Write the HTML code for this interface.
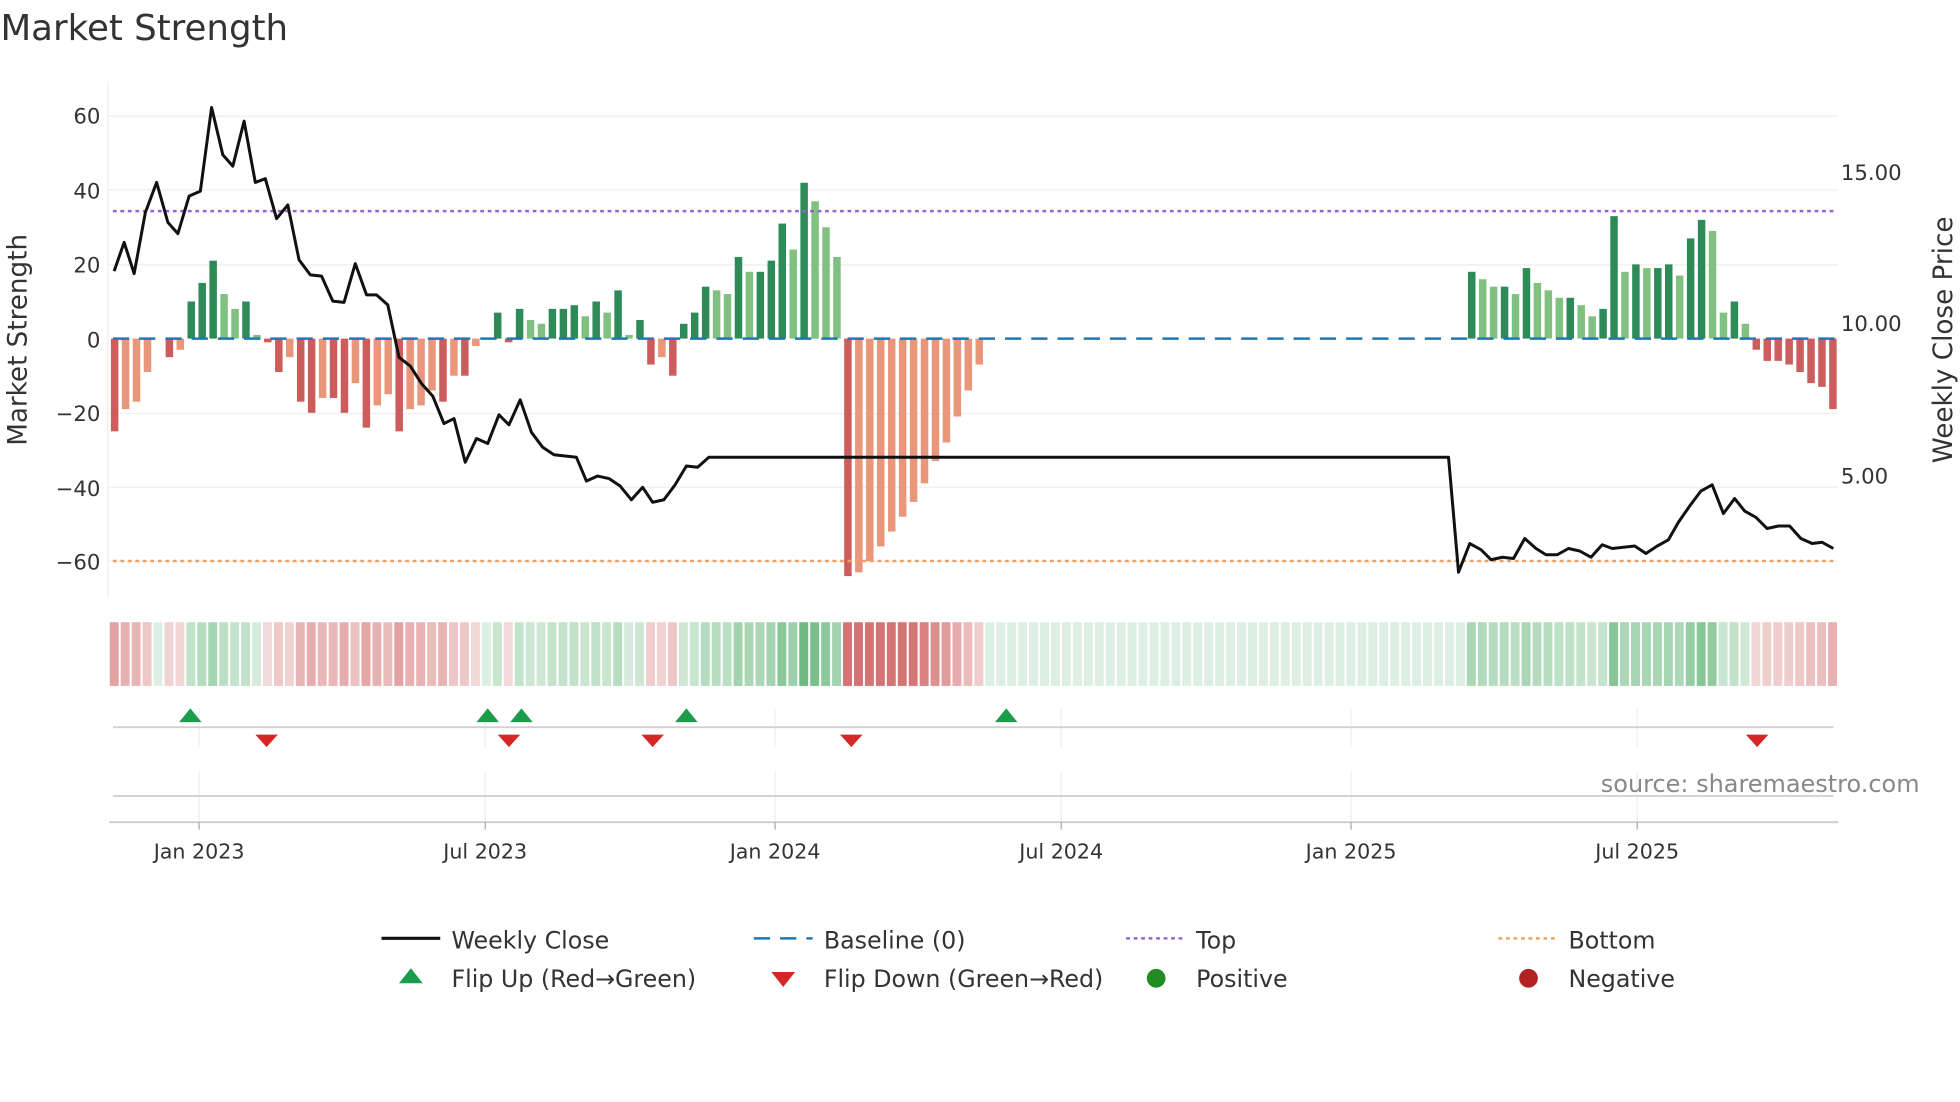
<!DOCTYPE html>
<html><head><meta charset="utf-8"><style>
html,body{margin:0;padding:0;background:#fff;}
svg{display:block;font-family:"DejaVu Sans","Liberation Sans",sans-serif;}
</style></head><body>
<svg id="s" width="1960" height="1102" viewBox="0 0 1568 882" xmlns="http://www.w3.org/2000/svg">
<text x="0" y="32" font-size="28.5" fill="#333">Market Strength</text>
<g stroke="#eeeeee" stroke-width="1">
<line x1="86" y1="93" x2="1471" y2="93"/><line x1="86" y1="152" x2="1471" y2="152"/>
<line x1="86" y1="212" x2="1471" y2="212"/><line x1="86" y1="331" x2="1471" y2="331"/>
<line x1="86" y1="390" x2="1471" y2="390"/><line x1="86" y1="449" x2="1471" y2="449"/>
<line x1="86" y1="65" x2="86" y2="478"/>
</g>
<g font-size="17" fill="#333" text-anchor="end">
<text x="80" y="99">60</text><text x="80" y="159">40</text><text x="80" y="218">20</text>
<text x="80" y="278">0</text><text x="80" y="337">−20</text><text x="80" y="397">−40</text><text x="80" y="456">−60</text>
</g>
<g font-size="17" fill="#333">
<text x="1473" y="144">15.00</text><text x="1473" y="265">10.00</text><text x="1473" y="387">5.00</text>
</g>
<text transform="translate(21,272) rotate(-90)" font-size="21" fill="#333" text-anchor="middle">Market Strength</text>
<text transform="translate(1562,272) rotate(-90)" font-size="21" fill="#333" text-anchor="middle">Weekly Close Price</text>
<g id="bars"></g>
<line x1="90" y1="271" x2="1468" y2="271" stroke="#1f77b4" stroke-width="2" stroke-dasharray="13,8"/>
<line x1="90" y1="169" x2="1468" y2="169" stroke="#9b5fd6" stroke-width="2" stroke-dasharray="3,3"/>
<line x1="90" y1="449" x2="1468" y2="449" stroke="#f0a060" stroke-width="2" stroke-dasharray="3,3"/>
<polyline fill="none" stroke="#111" stroke-width="2.4" stroke-linejoin="round" points="91,217 99,194 107,219 116,170 125,146 134,178 142,187 151,157 160,153 169,86 178,124 186,133 195,97 204,146 212,143 221,175 230,164 239,208 248,220 257,221 266,241 275,242 284,211 293,236 301,236 310,244 319,286 328,293 337,307 346,317 355,339 363,335 372,370 381,351 390,355 399,332 407,340 416,320 425,346 434,358 443,364 452,365 461,366 469,385 478,381 487,383 496,389 505,400 514,390 522,402 531,400 540,388 549,373 558,374 567,366 576,366 1159,366 1167,458 1176,435 1185,440 1193,448 1202,446 1211,447 1220,431 1229,439 1237,444 1246,444 1255,439 1264,441 1273,446 1282,436 1290,439 1299,438 1308,437 1317,443 1326,437 1335,432 1343,418 1352,405 1361,393 1370,388 1379,411 1388,399 1396,409 1405,414 1414,423 1423,421 1432,421 1441,431 1450,435 1458,434 1467,439"/>
<g id="heat"></g>
<g stroke="#eeeeee" stroke-width="1">
<line x1="159" y1="567" x2="159" y2="598"/><line x1="388" y1="567" x2="388" y2="598"/><line x1="620" y1="567" x2="620" y2="598"/><line x1="849" y1="567" x2="849" y2="598"/><line x1="1081" y1="567" x2="1081" y2="598"/><line x1="1310" y1="567" x2="1310" y2="598"/>
<line x1="159" y1="617" x2="159" y2="658"/><line x1="388" y1="617" x2="388" y2="658"/><line x1="620" y1="617" x2="620" y2="658"/><line x1="849" y1="617" x2="849" y2="658"/><line x1="1081" y1="617" x2="1081" y2="658"/><line x1="1310" y1="617" x2="1310" y2="658"/>
</g>
<line x1="90" y1="582" x2="1467" y2="582" stroke="#d0d0d0" stroke-width="1.5"/>
<line x1="90" y1="637" x2="1467" y2="637" stroke="#d0d0d0" stroke-width="1.5"/>
<line x1="87" y1="658" x2="1471" y2="658" stroke="#cccccc" stroke-width="1.5"/>
<g stroke="#aaa" stroke-width="1">
<line x1="159" y1="658" x2="159" y2="664"/><line x1="388" y1="658" x2="388" y2="664"/><line x1="620" y1="658" x2="620" y2="664"/><line x1="849" y1="658" x2="849" y2="664"/><line x1="1081" y1="658" x2="1081" y2="664"/><line x1="1310" y1="658" x2="1310" y2="664"/>
</g>
<g font-size="16.5" fill="#333" text-anchor="middle">
<text x="159" y="687">Jan 2023</text><text x="388" y="687">Jul 2023</text><text x="620" y="687">Jan 2024</text><text x="849" y="687">Jul 2024</text><text x="1081" y="687">Jan 2025</text><text x="1310" y="687">Jul 2025</text>
</g>
<g fill="#1a9c4a">
<polygon points="143,578 161,578 152,567"/><polygon points="381,578 399,578 390,567"/><polygon points="408,578 426,578 417,567"/><polygon points="540,578 558,578 549,567"/><polygon points="796,578 814,578 805,567"/>
</g>
<g fill="#d62728">
<polygon points="204,588 222,588 213,598"/><polygon points="398,588 416,588 407,598"/><polygon points="513,588 531,588 522,598"/><polygon points="672,588 690,588 681,598"/><polygon points="1397,588 1415,588 1406,598"/>
</g>
<text x="1536" y="634" font-size="19.2" fill="#888" text-anchor="end">source: sharemaestro.com</text>
<g font-size="19" fill="#333">
<line x1="305" y1="751" x2="352" y2="751" stroke="#111" stroke-width="2.5"/><text x="361" y="759">Weekly Close</text>
<line x1="603" y1="751" x2="650" y2="751" stroke="#1f77b4" stroke-width="2" stroke-dasharray="13,8"/><text x="659" y="759">Baseline (0)</text>
<line x1="901" y1="751" x2="948" y2="751" stroke="#9b5fd6" stroke-width="2" stroke-dasharray="3,3"/><text x="957" y="759">Top</text>
<line x1="1199" y1="751" x2="1246" y2="751" stroke="#f0a060" stroke-width="2" stroke-dasharray="3,3"/><text x="1255" y="759">Bottom</text>
<polygon points="319,787 338,787 328.5,775" fill="#1a9c4a"/><text x="361" y="790">Flip Up (Red→Green)</text>
<polygon points="617,778 636,778 626.5,790" fill="#d62728"/><text x="659" y="790">Flip Down (Green→Red)</text>
<circle cx="925" cy="783" r="7.5" fill="#228b22"/><text x="957" y="790">Positive</text>
<circle cx="1223" cy="783" r="7.5" fill="#b22222"/><text x="1255" y="790">Negative</text>
</g>
</svg>
<script>
(function(){
var v=[-25,-19,-17,-9,0,-5,-3,10,15,21,12,8,10,1,-1,-9,-5,-17,-20,-16,-16,-20,-12,-24,-18,-15,-25,-19,-18,-14,-17,-10,-10,-2,0,7,-1,8,5,4,8,8,9,6,10,7,13,1,5,-7,-5,-10,4,7,14,13,12,22,18,18,21,31,24,42,37,30,22,-64,-63,-60,-56,-52,-48,-44,-39,-33,-28,-21,-14,-7];
for(var k=0;k<44;k++)v.push(0);
v=v.concat([18,16,14,14,12,19,15,13,11,11,9,6,8,33,18,20,19,19,20,17,27,32,29,7,10,4,-3,-6,-6,-7,-9,-12,-13,-19]);
var n=v.length,x0=87,x1=1471,step=(x1-x0)/n;
var ns="http://www.w3.org/2000/svg",b=document.getElementById("bars"),h=document.getElementById("heat");
function r(g,x,y,w,hh,c){var e=document.createElementNS(ns,"rect");e.setAttribute("x",x);e.setAttribute("y",y);e.setAttribute("width",w);e.setAttribute("height",hh);e.setAttribute("fill",c);g.appendChild(e);}
var prev=0;
for(var i=0;i<n;i++){
 var val=v[i],x=x0+i*step;
 if(val!==0){
  var dark=Math.abs(val)>=Math.abs(prev)||(prev*val<0);
  var c=val>0?(dark?"#2e8b57":"#80c080"):(dark?"#cd5c5c":"#e9967a");
  var y=271-val*2.97;
  r(b,x+1.4,Math.min(y,271),6,Math.abs(val*2.97),c);
 }
 prev=val;
 var a=0.25+Math.min(Math.abs(val),45)/45*0.75;
 var base=val<0?[205,92,92]:[76,170,100];
 if(val===0)a=0.22;
 var cc="rgba("+base[0]+","+base[1]+","+base[2]+","+(a*0.85).toFixed(2)+")";
 r(h,x+0.5,498,step-1.6,51,cc);
}
})();
</script>
</body></html>
